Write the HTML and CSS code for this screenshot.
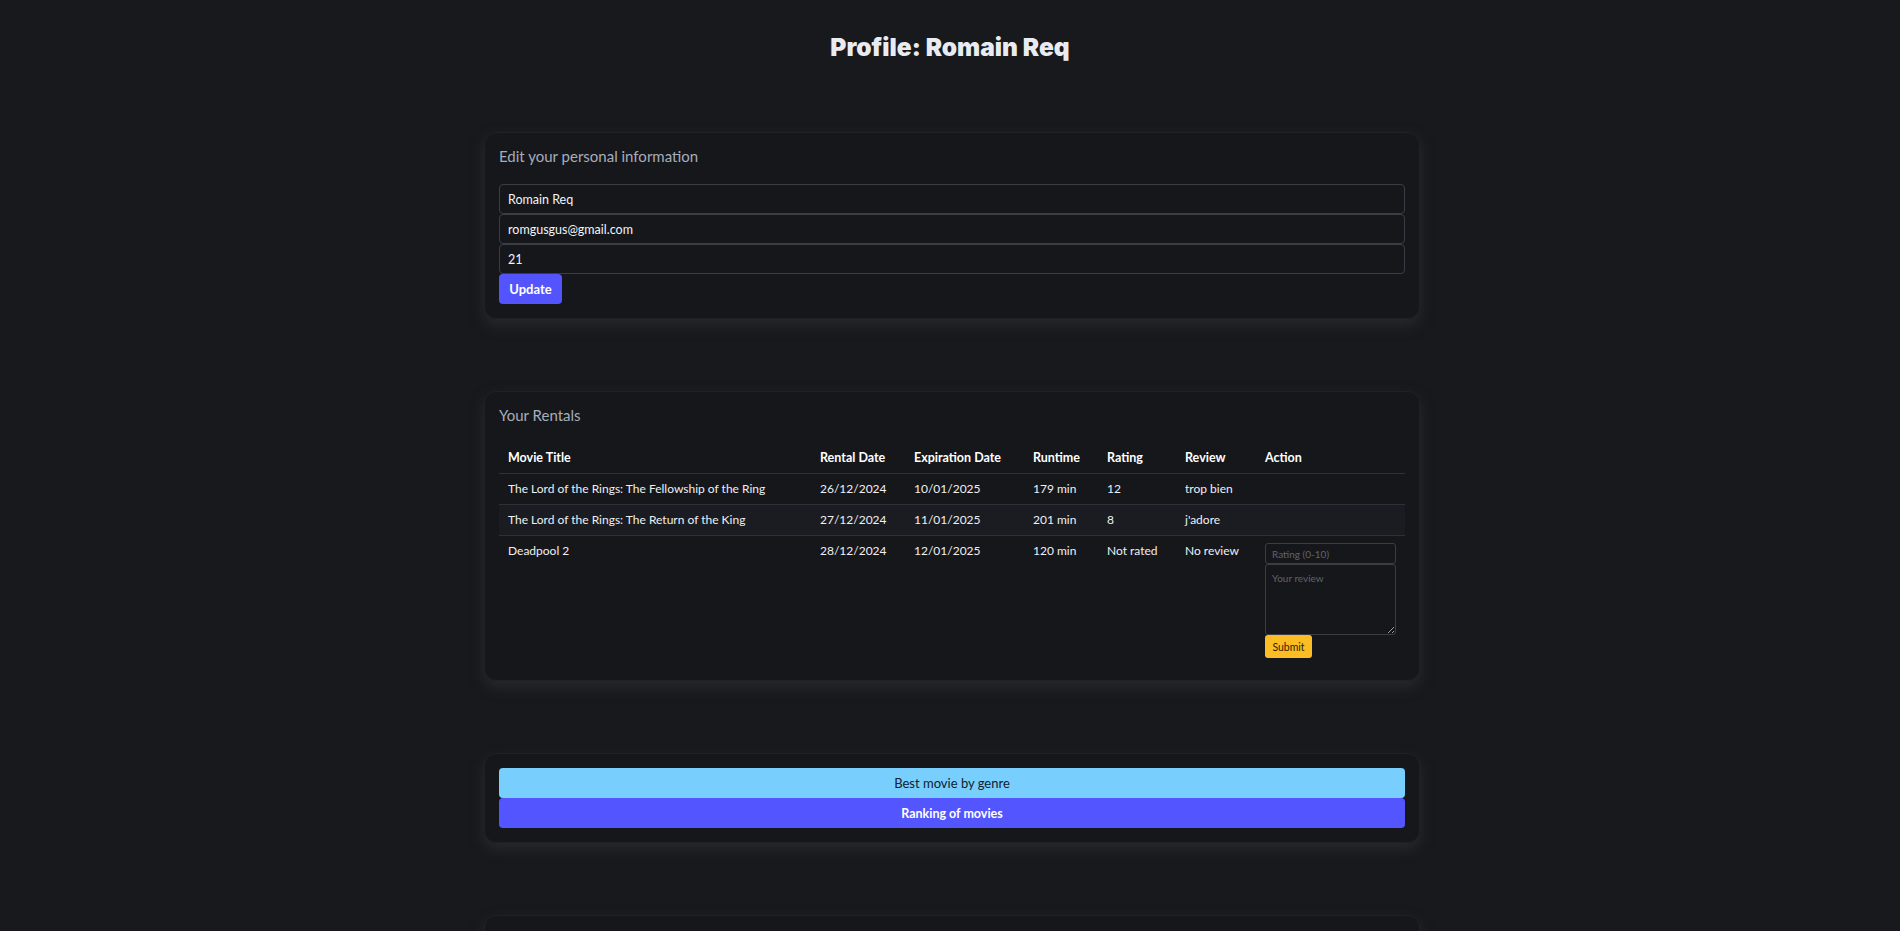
FILE: index.html
```html
<!DOCTYPE html>
<html lang="en">
<head>
<meta charset="utf-8">
<title>Profile: Romain Req</title>
<link rel="stylesheet" href="styles.css">
</head>
<body>
<h1 class="page-title">Profile: Romain Req</h1>
<main class="container">
  <section class="card">
    <h2 class="card-title">Edit your personal information</h2>
    <form class="profile-form">
      <input class="field" type="text" value="Romain Req">
      <input class="field" type="email" value="romgusgus@gmail.com">
      <input class="field" type="number" value="21">
      <button type="button" class="btn btn-primary">Update</button>
    </form>
  </section>

  <section class="card">
    <h2 class="card-title">Your Rentals</h2>
    <table class="rentals">
      <colgroup>
        <col class="c-title"><col class="c-rental"><col class="c-exp"><col class="c-run"><col class="c-rating"><col class="c-review"><col class="c-action">
      </colgroup>
      <thead>
        <tr><th>Movie Title</th><th>Rental Date</th><th>Expiration Date</th><th>Runtime</th><th>Rating</th><th>Review</th><th>Action</th></tr>
      </thead>
      <tbody>
        <tr><td>The Lord of the Rings: The Fellowship of the Ring</td><td>26/12/2024</td><td>10/01/2025</td><td>179 min</td><td>12</td><td>trop bien</td><td></td></tr>
        <tr class="alt"><td>The Lord of the Rings: The Return of the King</td><td>27/12/2024</td><td>11/01/2025</td><td>201 min</td><td>8</td><td>j'adore</td><td></td></tr>
        <tr class="last"><td>Deadpool 2</td><td>28/12/2024</td><td>12/01/2025</td><td>120 min</td><td>Not rated</td><td>No review</td>
          <td>
            <div class="review-form">
              <input class="mini-field" type="number" placeholder="Rating (0-10)">
              <textarea class="mini-area" placeholder="Your review"></textarea>
              <button type="button" class="btn-submit">Submit</button>
            </div>
          </td>
        </tr>
      </tbody>
    </table>
  </section>

  <section class="card card-actions">
    <button type="button" class="btn-wide btn-info">Best movie by genre</button>
    <button type="button" class="btn-wide btn-indigo">Ranking of movies</button>
  </section>

  <section class="card card-empty"></section>
</main>
</body>
</html>
```

FILE: styles.css
```css
* { box-sizing: border-box; }

html, body {
  margin: 0;
  background: #18191d;
}

body {
  font-family: "Lato", "Noto Sans", "Liberation Sans", sans-serif;
  color: #eef0f3;
  font-size: 12.5px;
  overflow: hidden;
}

.page-title {
  margin: 31px 0 0;
  text-align: center;
  font-family: "Inter", "Lato", sans-serif;
  font-size: 24.5px;
  line-height: 32px;
  font-weight: 900;
  color: #e8ecf2;
}

.container {
  width: 936px;
  margin: 69px auto 0;
  display: flex;
  flex-direction: column;
  gap: 72px;
  padding-left: 4px;
  box-sizing: content-box;
}

.card {
  background: #16171b;
  border: 1px solid #1f2126;
  border-radius: 12px;
  padding: 11px 14px 14px;
  box-shadow: 0 6px 14px rgba(52, 54, 62, 0.55);
}

.card-empty { min-height: 120px; }

.card-title {
  margin: 0 0 16px;
  font-size: 15px;
  line-height: 24px;
  font-weight: 400;
  color: #a6adbb;
}

.profile-form {
  display: flex;
  flex-direction: column;
  align-items: flex-start;
}

.field {
  width: 100%;
  height: 30px;
  background: #16171b;
  border: 1px solid #3a3d46;
  border-radius: 4px;
  color: #f2f4f7;
  font: inherit;
  font-size: 12.5px;
  padding: 0 8px;
  outline: none;
  -moz-appearance: textfield;
}
.field::-webkit-inner-spin-button,
.field::-webkit-outer-spin-button { -webkit-appearance: none; margin: 0; }

.btn {
  height: 30px;
  border: 0;
  border-radius: 4px;
  font: inherit;
  font-weight: 700;
  font-size: 13px;
  cursor: pointer;
}

.btn-primary {
  width: 63px;
  background: #5454ff;
  color: #ffffff;
}

.rentals {
  width: 100%;
  border-collapse: collapse;
  table-layout: fixed;
  font-size: 12px;
}

.c-title { width: 312px; }
.c-rental { width: 94px; }
.c-exp { width: 119px; }
.c-run { width: 74px; }
.c-rating { width: 78px; }
.c-review { width: 80px; }
.c-action { width: 149px; }

.rentals th,
.rentals td {
  text-align: left;
  padding: 6px 9px;
  line-height: 18px;
  vertical-align: top;
  white-space: nowrap;
}

.rentals th {
  font-weight: 700;
  font-size: 12.5px;
  color: #ffffff;
}

.rentals thead tr,
.rentals tbody tr {
  border-bottom: 1px solid #2e3139;
}

.rentals tbody tr.last { border-bottom: 0; }
.rentals tr.alt { background: #1b1c21; }

.review-form {
  display: flex;
  flex-direction: column;
  align-items: flex-start;
  padding-top: 1px;
  padding-bottom: 2px;
}

.mini-field,
.mini-area {
  width: 131px;
  background: #16171b;
  border: 1px solid #3a3d46;
  border-radius: 3px;
  color: #e5e7eb;
  font: inherit;
  font-size: 10px;
  padding: 0 6px;
  outline: none;
  -moz-appearance: textfield;
}
.mini-field::-webkit-inner-spin-button,
.mini-field::-webkit-outer-spin-button { -webkit-appearance: none; margin: 0; }

.mini-field { height: 21px; }

.mini-area {
  height: 71px;
  padding-top: 4px;
  display: block;
  resize: vertical;
}

.mini-field::placeholder,
.mini-area::placeholder { color: #5f636d; }

.btn-submit {
  width: 47px;
  height: 23px;
  border: 0;
  border-radius: 3px;
  background: #fbbd23;
  color: #2a1d00;
  font: inherit;
  font-size: 10.5px;
  padding: 0;
}

.card-actions {
  padding-top: 14px;
  display: flex;
  flex-direction: column;
}

.btn-wide {
  width: 100%;
  height: 30px;
  border: 0;
  border-radius: 4px;
  font: inherit;
  font-size: 12.5px;
  font-weight: 700;
}

.btn-info {
  background: #78cffd;
  color: #10202c;
  font-weight: 400;
  font-size: 13px;
}

.btn-indigo {
  background: #5355ff;
  color: #ffffff;
}
```
